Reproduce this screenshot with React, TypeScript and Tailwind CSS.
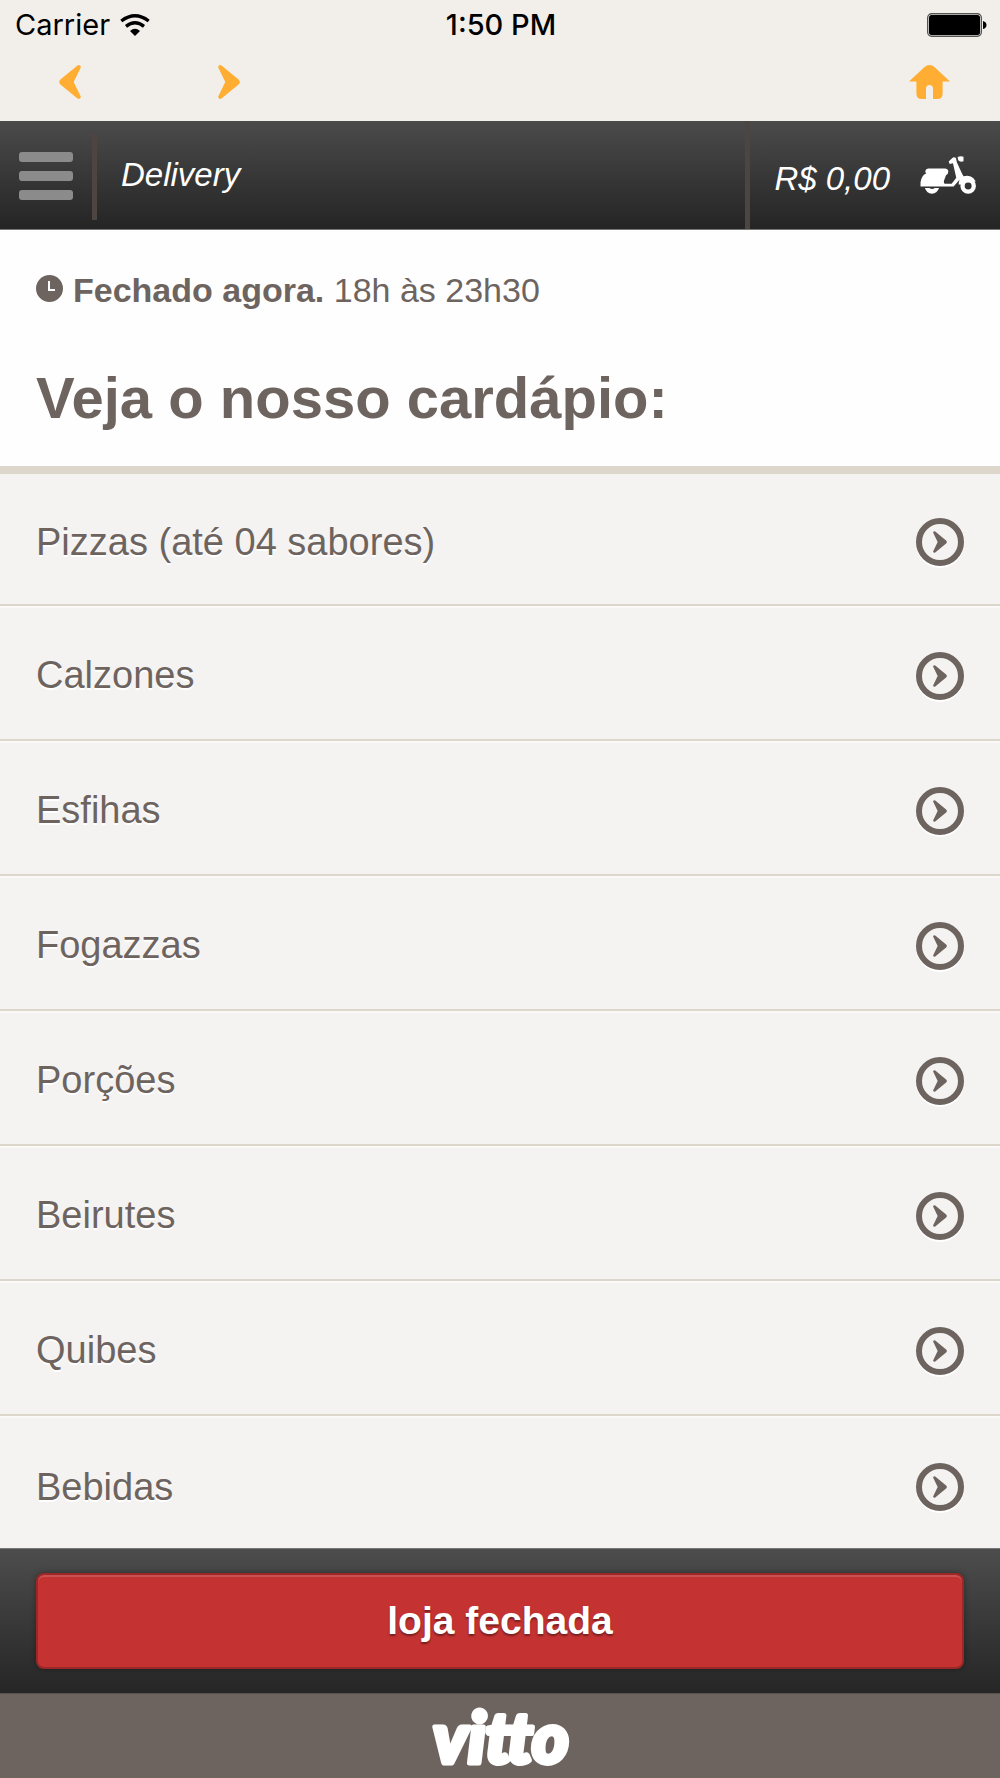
const categories = [
  "Pizzas (até 04 sabores)",
  "Calzones",
  "Esfihas",
  "Fogazzas",
  "Porções",
  "Beirutes",
  "Quibes",
  "Bebidas",
];

function WifiIcon() {
  return (
    <svg viewBox="0 0 90 66" className="h-[22px] w-[30px]" aria-hidden="true">
      <g fill="none" stroke="#000" strokeWidth="10">
        <path d="M4 21 Q45 -10 86 21" />
        <path d="M18 37 Q45 16 72 37" />
      </g>
      <path d="M30 51 Q45 38 60 51 L45 66 Z" />
    </svg>
  );
}

function BatteryIcon() {
  return (
    <svg viewBox="0 0 60 24" className="h-6 w-[60px]" aria-label="Bateria cheia" role="img">
      <rect x="0.7" y="0.7" width="53.6" height="22.6" rx="4" fill="#fff" stroke="#55544f" strokeWidth="1.4" />
      <rect x="2" y="2" width="51" height="20" rx="2.5" />
      <path d="M56 8 Q59.5 9 59.5 12 Q59.5 15 56 16 Z" />
    </svg>
  );
}

function DartIcon({ className }: { className: string }) {
  return (
    <svg viewBox="0 0 22 34" className={className} fill="currentColor" aria-hidden="true">
      <path d="M3.5 0.6 L20.6 14.6 Q23 17 20.6 19.4 L3.5 33.4 Q1.5 34.6 0.4 32.8 Q0 32 0.5 31 L7.3 17 L0.5 3 Q0 2 0.4 1.2 Q1.5 -0.6 3.5 0.6 Z" />
    </svg>
  );
}

function HomeIcon() {
  return (
    <svg viewBox="0 0 41 34" className="h-[34px] w-[41px]" fill="currentColor" aria-hidden="true">
      <path d="M0 16.4 L15.3 2.2 Q20.5 -2 25.7 2.2 L41 16.4 H33.6 V28.5 Q33.6 34 28 34 H24 V24 Q24 20 20.5 20 Q17 20 17 24 V34 H13 Q7.4 34 7.4 28.5 V16.4 Z" />
    </svg>
  );
}

function ScooterIcon() {
  return (
    <svg viewBox="0 0 168 115" className="mb-2 h-[38px] w-14" fill="#fff" aria-hidden="true">
      <path d="M16 44 Q18 38 25 38 H76 Q85 40 85 47 Q85 54 78 58 L72 74 Q70 84 76 84 H95 L109 66 L99 22 L89 24 L86 17 L97 6 Q102 1 108 6 L111 20 L126 52 L131 61 Q151 56 161 67 L168 77 L160 79 L142 73 Q128 74 124 86 H116 Q117 77 119 72 L101 92 H1 Q-1 70 11 57 L18 53 Q14 49 16 44 Z" />
      <path d="M113 3 Q122 -1 131 2 L131 16 Q121 20 115 13 Z" />
      <path d="M14 97 H28 Q36 103 44 97 H57 Q51 114 35 114 Q20 114 14 97 Z" />
      <circle cx="145" cy="91" r="17" fill="none" stroke="#fff" strokeWidth="13" />
    </svg>
  );
}

function ClockIcon() {
  return (
    <svg viewBox="0 0 27 27" className="mb-1 h-[27px] w-[27px] shrink-0" aria-hidden="true">
      <circle cx="13.5" cy="13.5" r="13.5" fill="#6e645f" />
      <path d="M13 6 V15 H19" fill="none" stroke="#fff" strokeWidth="2" />
    </svg>
  );
}

function CircleArrow() {
  return (
    <span className="flex size-12 shrink-0 items-center justify-center rounded-full border-[6px] border-[#6e645f] shadow-[0_2px_0_#fff]">
      <DartIcon className="h-[22px] w-[14px]" />
    </span>
  );
}

function VittoLogo() {
  return (
    <svg viewBox="0 0 150 84" className="h-[84px] w-[150px] overflow-visible" role="img" aria-label="vitto">
      <text
        x="76"
        y="69"
        textAnchor="middle"
        fill="#fff"
        stroke="#fff"
        strokeWidth="5"
        strokeLinejoin="round"
        className="font-[Lato,sans-serif] text-[70px] font-black italic"
      >
        vitto
      </text>
    </svg>
  );
}

export default function App() {
  return (
    <div className="flex min-h-screen flex-col bg-[#f4f3f1] font-['Liberation_Sans',Arial,sans-serif] text-[#6e645f]">
      <div className="bg-[#f2eee9] pb-[22px]">
        <div className="grid h-[50px] grid-cols-3 items-center pr-[13px] pl-[15px] font-[Inter,sans-serif] text-[29px] text-black">
          <span className="flex items-center gap-[10px]">
            Carrier
            <WifiIcon />
          </span>
          <time className="text-center font-medium">1:50 PM</time>
          <span className="flex justify-end">
            <BatteryIcon />
          </span>
        </div>
        <nav className="flex h-[49px] items-end pr-[50px] pl-[59px] text-[#ffad33]">
          <button type="button" aria-label="Voltar">
            <DartIcon className="h-[34px] w-[22px] -scale-x-100" />
          </button>
          <button type="button" aria-label="Avançar" className="ml-[137px]">
            <DartIcon className="h-[34px] w-[22px]" />
          </button>
          <button type="button" aria-label="Início" className="ml-auto">
            <HomeIcon />
          </button>
        </nav>
      </div>

      <header className="flex h-[109px] items-stretch border-b border-[#777] bg-linear-to-b from-[#4b4b4b] to-[#252525] text-[33px] text-white italic">
        <button type="button" aria-label="Menu" className="flex flex-col justify-center gap-[9px] pt-[2px] pr-[19px] pl-[19px]">
          <span className="h-[10px] w-[54px] rounded-[3px] bg-[#8b8b8b]" />
          <span className="h-[10px] w-[54px] rounded-[3px] bg-[#8b8b8b]" />
          <span className="h-[10px] w-[54px] rounded-[3px] bg-[#8b8b8b]" />
        </button>
        <div className="mt-3 mb-[9px] w-[5px] bg-[#4d4541]" />
        <h1 className="flex flex-1 items-center pl-6">Delivery</h1>
        <a href="#pedido" className="flex items-center gap-[30px] border-l-[5px] border-[#4d4541] pt-2 pr-6 pl-6" aria-label="Pedido R$ 0,00">
          <span>R$ 0,00</span>
          <ScooterIcon />
        </a>
      </header>

      <section className="border-b-8 border-[#dcd6cb] bg-[#fefefe] px-9 pt-10 pb-8">
        <p className="flex items-center gap-[10px] text-[34px] leading-10">
          <ClockIcon />
          <span>
            <strong>Fechado agora.</strong> 18h às 23h30
          </span>
        </p>
        <h2 className="mt-[52px] text-[58px] leading-[72px] font-bold">Veja o nosso cardápio:</h2>
      </section>

      <ul className="flex-1">
        {categories.map((name) => (
          <li
            key={name}
            className="h-[135px] border-b-2 border-[#dcd6cb] shadow-[0_2px_0_#faf9f7] first:h-[132px] last:h-[136px] last:border-b-0 last:shadow-none"
          >
            <a
              href="#categoria"
              className="flex h-full items-center justify-between px-9 pt-[6px] text-[38px] text-shadow-[0_2px_0_#ffffff]"
            >
              {name}
              <CircleArrow />
            </a>
          </li>
        ))}
      </ul>

      <div className="z-10 -mt-1 border-t border-[#777] bg-linear-to-b from-[#4d4d4d] to-[#262626] px-9 pt-6 pb-6">
        <button
          type="button"
          className="h-24 w-full rounded-lg border-2 border-[#9c2727] bg-[#c43232] text-[39px] font-bold text-white shadow-[inset_0_2px_0_#cb5252,0_0_6px_#00000055] text-shadow-[0_2px_2px_#00000066]"
        >
          loja fechada
        </button>
      </div>

      <footer className="flex h-[85px] items-center justify-center border-t border-[#57514d] bg-[#6e645f]">
        <a href="#vitto">
          <VittoLogo />
        </a>
      </footer>
    </div>
  );
}
